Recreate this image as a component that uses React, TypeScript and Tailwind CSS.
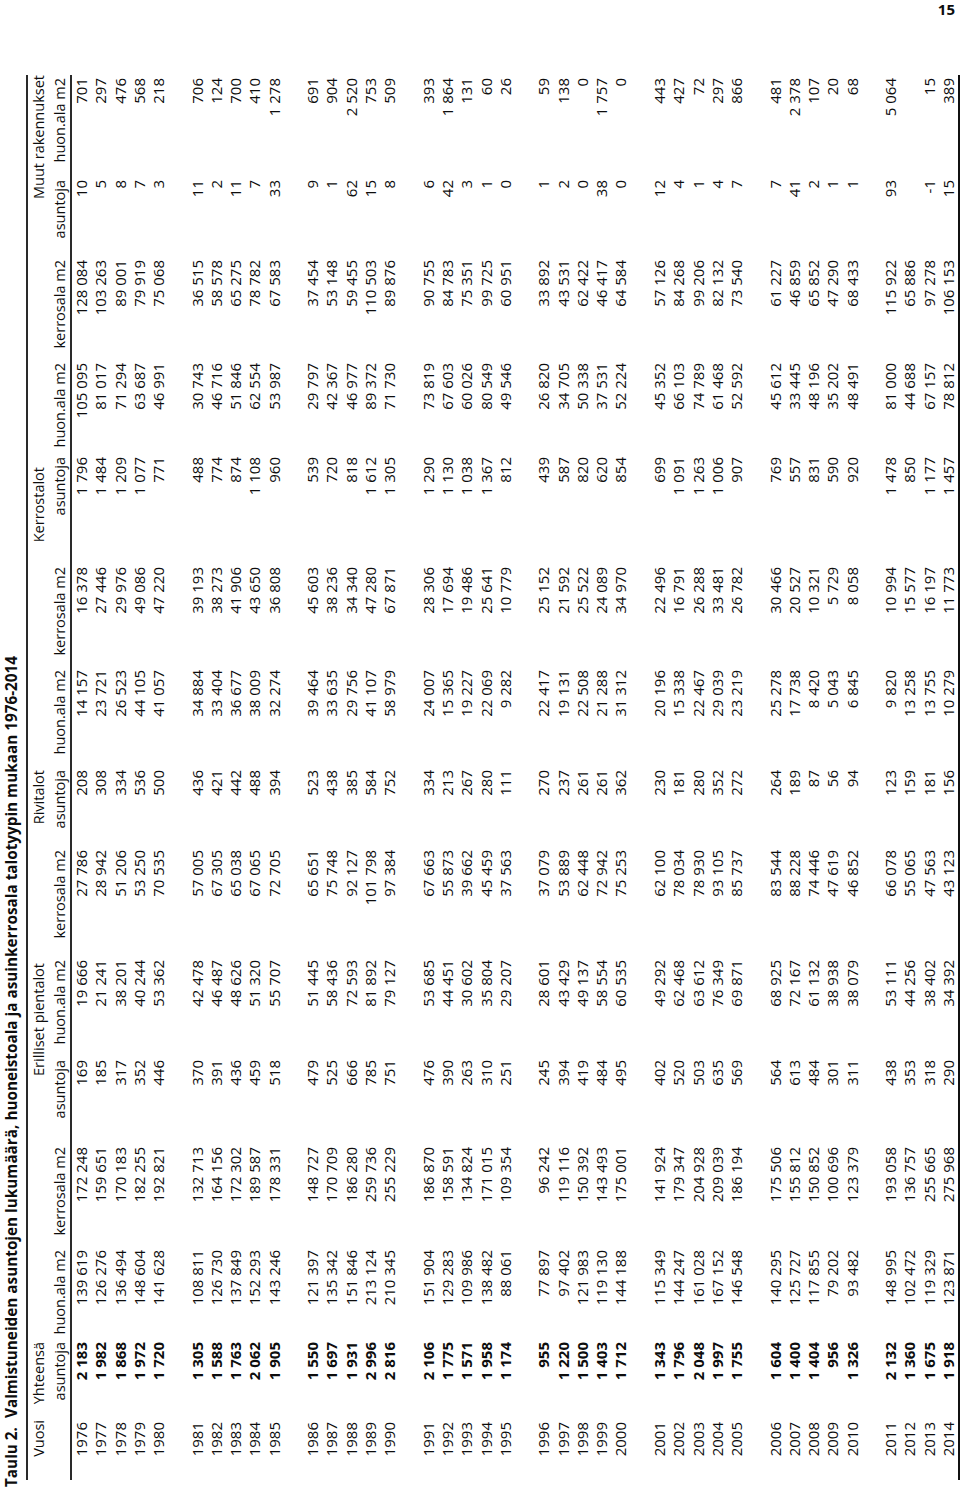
const COLS =
  "grid grid-cols-[61px_80px_92px_103px_87px_100px_110px_80px_100px_103px_110px_94px_103px_80px_102px]";

const groups: string[][][] = [
  [
    ["1976", "2 183", "139 619", "172 248", "169", "19 666", "27 786", "208", "14 157", "16 378", "1 796", "105 095", "128 084", "10", "701"],
    ["1977", "1 982", "126 276", "159 651", "185", "21 241", "28 942", "308", "23 721", "27 446", "1 484", "81 017", "103 263", "5", "297"],
    ["1978", "1 868", "136 494", "170 183", "317", "38 201", "51 206", "334", "26 523", "29 976", "1 209", "71 294", "89 001", "8", "476"],
    ["1979", "1 972", "148 604", "182 255", "352", "40 244", "53 250", "536", "44 105", "49 086", "1 077", "63 687", "79 919", "7", "568"],
    ["1980", "1 720", "141 628", "192 821", "446", "53 362", "70 535", "500", "41 057", "47 220", "771", "46 991", "75 068", "3", "218"],
  ],
  [
    ["1981", "1 305", "108 811", "132 713", "370", "42 478", "57 005", "436", "34 884", "39 193", "488", "30 743", "36 515", "11", "706"],
    ["1982", "1 588", "126 730", "164 156", "391", "46 487", "67 305", "421", "33 404", "38 273", "774", "46 716", "58 578", "2", "124"],
    ["1983", "1 763", "137 849", "172 302", "436", "48 626", "65 038", "442", "36 677", "41 906", "874", "51 846", "65 275", "11", "700"],
    ["1984", "2 062", "152 293", "189 587", "459", "51 320", "67 065", "488", "38 009", "43 650", "1 108", "62 554", "78 782", "7", "410"],
    ["1985", "1 905", "143 246", "178 331", "518", "55 707", "72 705", "394", "32 274", "36 808", "960", "53 987", "67 583", "33", "1 278"],
  ],
  [
    ["1986", "1 550", "121 397", "148 727", "479", "51 445", "65 651", "523", "39 464", "45 603", "539", "29 797", "37 454", "9", "691"],
    ["1987", "1 697", "135 342", "170 709", "525", "58 436", "75 748", "438", "33 635", "38 236", "720", "42 367", "53 148", "1", "904"],
    ["1988", "1 931", "151 846", "186 280", "666", "72 593", "92 127", "385", "29 756", "34 340", "818", "46 977", "59 455", "62", "2 520"],
    ["1989", "2 996", "213 124", "259 736", "785", "81 892", "101 798", "584", "41 107", "47 280", "1 612", "89 372", "110 503", "15", "753"],
    ["1990", "2 816", "210 345", "255 229", "751", "79 127", "97 384", "752", "58 979", "67 871", "1 305", "71 730", "89 876", "8", "509"],
  ],
  [
    ["1991", "2 106", "151 904", "186 870", "476", "53 685", "67 663", "334", "24 007", "28 306", "1 290", "73 819", "90 755", "6", "393"],
    ["1992", "1 775", "129 283", "158 591", "390", "44 451", "55 873", "213", "15 365", "17 694", "1 130", "67 603", "84 783", "42", "1 864"],
    ["1993", "1 571", "109 986", "134 824", "263", "30 602", "39 662", "267", "19 227", "19 486", "1 038", "60 026", "75 351", "3", "131"],
    ["1994", "1 958", "138 482", "171 015", "310", "35 804", "45 459", "280", "22 069", "25 641", "1 367", "80 549", "99 725", "1", "60"],
    ["1995", "1 174", "88 061", "109 354", "251", "29 207", "37 563", "111", "9 282", "10 779", "812", "49 546", "60 951", "0", "26"],
  ],
  [
    ["1996", "955", "77 897", "96 242", "245", "28 601", "37 079", "270", "22 417", "25 152", "439", "26 820", "33 892", "1", "59"],
    ["1997", "1 220", "97 402", "119 116", "394", "43 429", "53 889", "237", "19 131", "21 592", "587", "34 705", "43 531", "2", "138"],
    ["1998", "1 500", "121 983", "150 392", "419", "49 137", "62 448", "261", "22 508", "25 522", "820", "50 338", "62 422", "0", "0"],
    ["1999", "1 403", "119 130", "143 493", "484", "58 554", "72 942", "261", "21 288", "24 089", "620", "37 531", "46 417", "38", "1 757"],
    ["2000", "1 712", "144 188", "175 001", "495", "60 535", "75 253", "362", "31 312", "34 970", "854", "52 224", "64 584", "0", "0"],
  ],
  [
    ["2001", "1 343", "115 349", "141 924", "402", "49 292", "62 100", "230", "20 196", "22 496", "699", "45 352", "57 126", "12", "443"],
    ["2002", "1 796", "144 247", "179 347", "520", "62 468", "78 034", "181", "15 338", "16 791", "1 091", "66 103", "84 268", "4", "427"],
    ["2003", "2 048", "161 028", "204 928", "503", "63 612", "78 930", "280", "22 467", "26 288", "1 263", "74 789", "99 206", "1", "72"],
    ["2004", "1 997", "167 152", "209 039", "635", "76 349", "93 105", "352", "29 039", "33 481", "1 006", "61 468", "82 132", "4", "297"],
    ["2005", "1 755", "146 548", "186 194", "569", "69 871", "85 737", "272", "23 219", "26 782", "907", "52 592", "73 540", "7", "866"],
  ],
  [
    ["2006", "1 604", "140 295", "175 506", "564", "68 925", "83 544", "264", "25 278", "30 466", "769", "45 612", "61 227", "7", "481"],
    ["2007", "1 400", "125 727", "155 812", "613", "72 167", "88 228", "189", "17 738", "20 527", "557", "33 445", "46 859", "41", "2 378"],
    ["2008", "1 404", "117 855", "150 852", "484", "61 132", "74 446", "87", "8 420", "10 321", "831", "48 196", "65 852", "2", "107"],
    ["2009", "956", "79 202", "100 696", "301", "38 938", "47 619", "56", "5 043", "5 729", "590", "35 202", "47 290", "1", "20"],
    ["2010", "1 326", "93 482", "123 379", "311", "38 079", "46 852", "94", "6 845", "8 058", "920", "48 491", "68 433", "1", "68"],
  ],
  [
    ["2011", "2 132", "148 995", "193 058", "438", "53 111", "66 078", "123", "9 820", "10 994", "1 478", "81 000", "115 922", "93", "5 064"],
    ["2012", "1 360", "102 472", "136 757", "353", "44 256", "55 065", "159", "13 258", "15 577", "850", "44 688", "65 886", "", ""],
    ["2013", "1 675", "119 329", "255 665", "318", "38 402", "47 563", "181", "13 755", "16 197", "1 177", "67 157", "97 278", "-1", "15"],
    ["2014", "1 918", "123 871", "275 968", "290", "34 392", "43 123", "156", "10 279", "11 773", "1 457", "78 812", "106 153", "15", "389"],
  ],
];

const subHeads = [
  "",
  "asuntoja", "huon.ala m2", "kerrosala m2",
  "asuntoja", "huon.ala m2", "kerrosala m2",
  "asuntoja", "huon.ala m2", "kerrosala m2",
  "asuntoja", "huon.ala m2", "kerrosala m2",
  "asuntoja", "huon.ala m2",
];

function DataRow({ cells }: { cells: string[] }) {
  return (
    <div className={`${COLS} h-[19.27px] leading-[19.27px]`}>
      {cells.map((c, i) => (
        <div
          key={i}
          className={`pr-[3px] text-right whitespace-nowrap ${i === 1 ? "font-bold" : ""}`}
        >
          {c}
        </div>
      ))}
    </div>
  );
}

export default function App() {
  return (
    <div className="w-[960px] h-[1489px] bg-white text-[#0d0d0d] font-['Open_Sans',sans-serif] overflow-hidden">
      <div className="h-[20px] flex justify-end pr-[5px] text-[15px] font-bold leading-[18px]">15</div>

      <div className="w-[960px] h-[1469px] overflow-hidden">
        {/* landscape table, turned a quarter counter-clockwise */}
        <div className="w-[1469px] h-[960px] origin-top-left -rotate-90 translate-y-[1469px] text-[15px]">
          <div className="h-[26px] pl-[2px] flex items-start font-bold text-[15.3px] leading-[22px] whitespace-nowrap">
            <span className="mr-[9px]">Taulu 2.</span>
            <span>
              Valmistuneiden asuntojen lukumäärä, huoneistoala ja asuinkerrosala talotyypin mukaan 1976-2014
            </span>
          </div>

          <div className="ml-[9px] w-[1405px]">
            <div className="border-t-2 border-b-2 border-[#2a2a2a] text-[14.5px]">
              <div className={`${COLS} h-[21px] leading-[21px] whitespace-nowrap`}>
                <div className="pr-[1px] text-right">Vuosi</div>
                <div className="pr-[3px] text-right">Yhteensä</div>
                <div className="col-span-2" />
                <div className="col-span-2 pr-[6px] text-right">Erilliset pientalot</div>
                <div />
                <div className="pr-[3px] text-right">Rivitalot</div>
                <div className="col-span-2" />
                <div className="pr-[13px] text-right">Kerrostalot</div>
                <div className="col-span-2" />
                <div className="col-span-2 pr-[0px] text-right">Muut rakennukset</div>
              </div>
              <div className={`${COLS} h-[21px] leading-[21px] whitespace-nowrap`}>
                {subHeads.map((h, i) => (
                  <div key={i} className="pr-[3px] text-right">
                    {h}
                  </div>
                ))}
              </div>
            </div>

            <div className="border-b-[3px] border-[#111]">
              {groups.map((g, gi) => (
                <div key={gi}>
                  {gi > 0 && <div className="h-[19.27px]" />}
                  {g.map((r) => (
                    <DataRow key={r[0]} cells={r} />
                  ))}
                </div>
              ))}
            </div>
          </div>
        </div>
      </div>
    </div>
  );
}
